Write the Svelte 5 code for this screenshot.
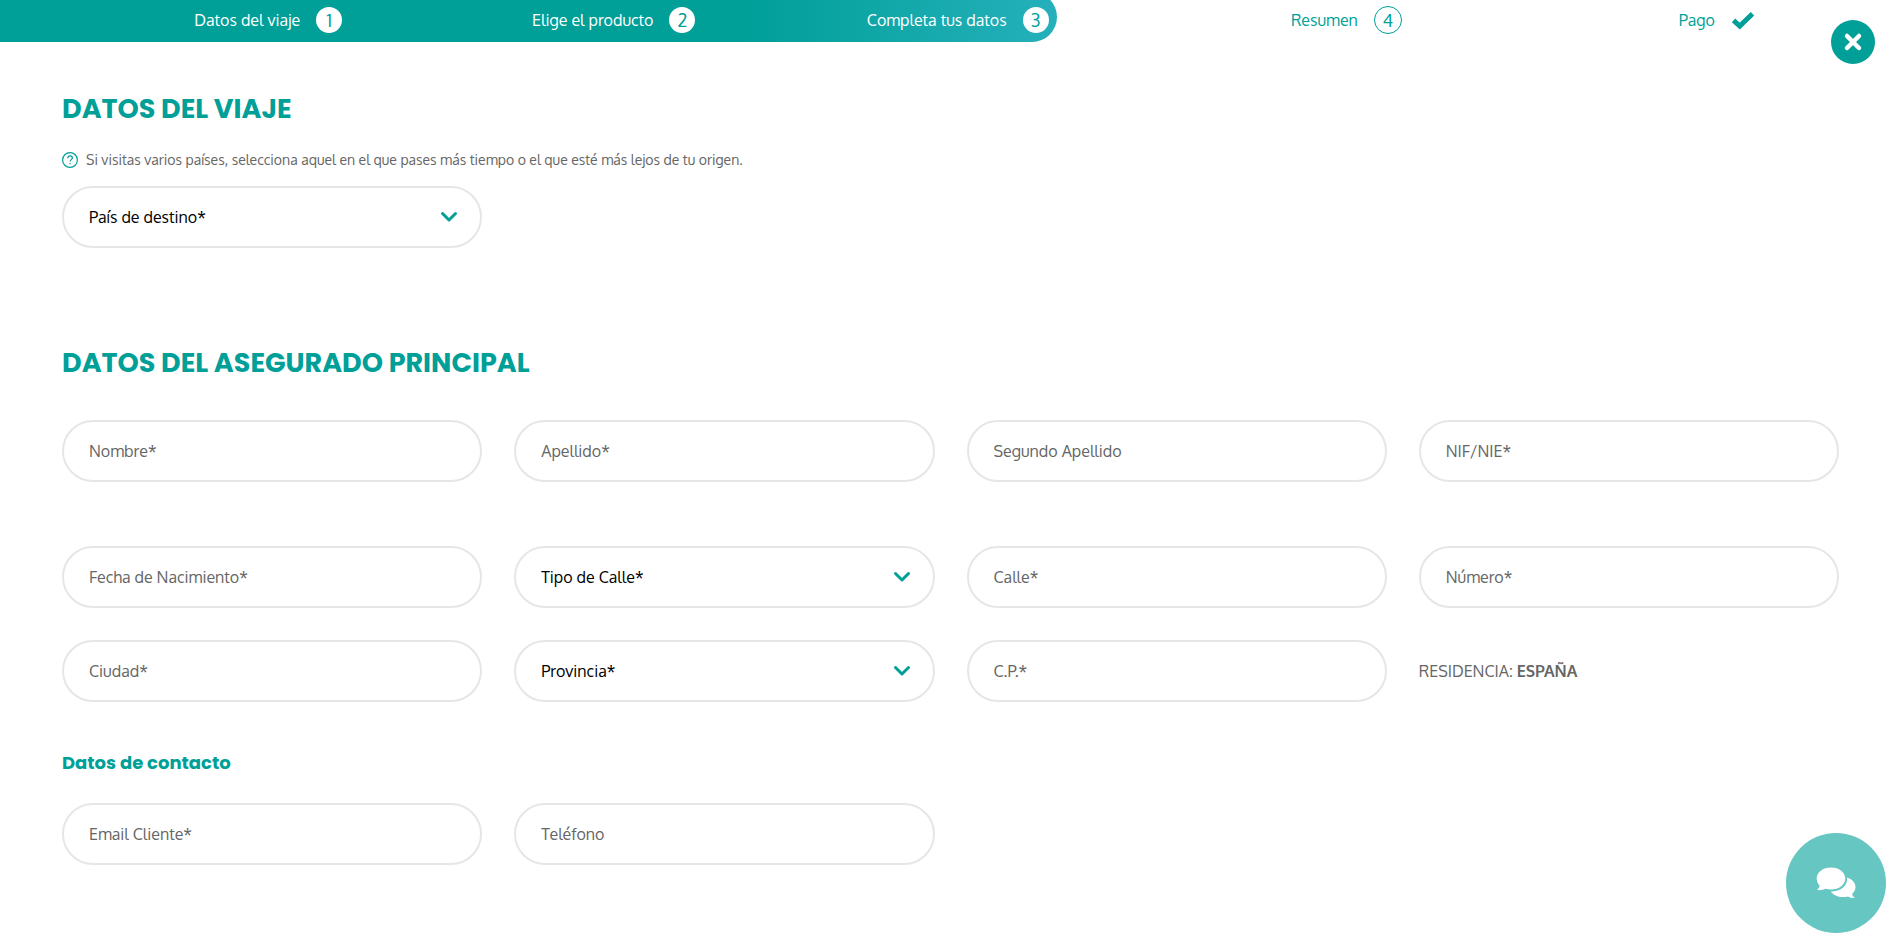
<script>
	const steps = [
		{ label: 'Datos del viaje', number: 1, done: true },
		{ label: 'Elige el producto', number: 2, done: true },
		{ label: 'Completa tus datos', number: 3, done: true },
		{ label: 'Resumen', number: 4, done: false },
		{ label: 'Pago', number: null, done: false }
	];

	const nameFields = [
		{ name: 'nombre', label: 'Nombre*' },
		{ name: 'apellido', label: 'Apellido*' },
		{ name: 'segundo-apellido', label: 'Segundo Apellido' },
		{ name: 'nif', label: 'NIF/NIE*' }
	];

	const addressFields = [
		{ name: 'fecha-nacimiento', label: 'Fecha de Nacimiento*' },
		{ name: 'tipo-calle', label: 'Tipo de Calle*', select: true },
		{ name: 'calle', label: 'Calle*' },
		{ name: 'numero', label: 'Número*' },
		{ name: 'ciudad', label: 'Ciudad*' },
		{ name: 'provincia', label: 'Provincia*', select: true },
		{ name: 'cp', label: 'C.P.*' }
	];

	const contactFields = [
		{ name: 'email', label: 'Email Cliente*', type: 'email' },
		{ name: 'telefono', label: 'Teléfono', type: 'tel' }
	];
</script>

{#snippet field(item)}
	{#if item.select}
		<div class="select-wrapper">
			<select class="field" name={item.name} aria-label={item.label}>
				<option value="">{item.label}</option>
			</select>
			<svg class="chevron" viewBox="0 0 18 12" aria-hidden="true">
				<path d="M2.5 2.5 9 9l6.5-6.5" />
			</svg>
		</div>
	{:else}
		<input
			class="field"
			type={item.type ?? 'text'}
			name={item.name}
			placeholder={item.label}
			aria-label={item.label}
		/>
	{/if}
{/snippet}

<header>
	<ol class="steps">
		{#each steps as step}
			<li class="step" class:done={step.done}>
				<span>{step.label}</span>
				{#if step.number}
					<span class="number">{step.number}</span>
				{:else}
					<svg class="check" viewBox="0 0 24 18" aria-hidden="true">
						<path d="M2.500 9.300 8.800 15 21.500 2.800" />
					</svg>
				{/if}
			</li>
		{/each}
	</ol>
	<button class="close" type="button" aria-label="Cerrar">
		<svg viewBox="0 0 20 20" aria-hidden="true">
			<path d="M4 4l12 12M16 4 4 16" />
		</svg>
	</button>
</header>

<main>
	<form>
		<section class="trip">
			<h2>DATOS DEL VIAJE</h2>
			<p class="hint">
				<svg class="help" viewBox="0 0 16 16" aria-hidden="true">
					<circle cx="8" cy="8" r="7.4" />
					<path d="M5.700 6.200C5.700 4.800 6.700 3.900 8.100 3.900S10.400 4.800 10.400 6C10.400 7.600 8.100 7.700 8.100 9.500" />
					<path d="M8.100 11v1.300" />
				</svg>
				<span>Si visitas varios países, selecciona aquel en el que pases más tiempo o el que esté más lejos de tu origen.</span>
			</p>
			<div class="grid">
				{@render field({ name: 'pais', label: 'País de destino*', select: true })}
			</div>
		</section>

		<section>
			<h2>DATOS DEL ASEGURADO PRINCIPAL</h2>
			<div class="grid names">
				{#each nameFields as item}
					{@render field(item)}
				{/each}
			</div>
			<div class="grid">
				{#each addressFields as item}
					{@render field(item)}
				{/each}
				<p class="residence">RESIDENCIA: <strong>ESPAÑA</strong></p>
			</div>
		</section>

		<section>
			<h3>Datos de contacto</h3>
			<div class="grid">
				{#each contactFields as item}
					{@render field(item)}
				{/each}
			</div>
		</section>
	</form>
</main>

<button class="chat" type="button" aria-label="Abrir chat">
	<svg viewBox="0 0 40 32" aria-hidden="true">
		<path d="M31 10.500c5 1.500 8.500 5 8.500 9.500 0 2.800-1.300 5.200-3.400 7 .3 1.600 1.300 2.800 2.700 3.900-2.400.2-4.700-.4-6.700-1.500-1.600.5-3.300.7-5.100.7-5.300 0-10-2.200-12.200-5.600C24 24.700 31 19.500 31 12.500z" />
		<path d="M15 .5C23 .5 29.300 5.300 29.300 11.500S23 22.500 15 22.500c-1.900 0-3.700-.3-5.300-.8C7.200 22.900 4.200 23.400.9 23c1.600-1.200 2.500-2.600 2.800-4.200C1.800 16.900.7 14.300.7 11.500.7 5.300 7 .5 15 .5z" />
	</svg>
</button>

<style>
	:global(body) {
		background: #fff;
		color: #666;
		font-family: Oxygen, 'Noto Sans', sans-serif;
		font-size: 16px;
	}

	/* Progress bar */
	header {
		position: relative;
		height: 42px;
	}
	.steps {
		display: grid;
		grid-template-columns: 342fr repeat(4, 353fr);
		height: 42px;
		margin: 0;
		padding: 0 139px 0 0;
		overflow: hidden;
		list-style: none;
	}
	/* Filled part, behind the first three steps */
	.steps::before {
		content: '';
		grid-area: 1 / 1 / 2 / 4;
		margin: -8px -8px 0 0;
		border-radius: 0 25px 25px 0;
		background: linear-gradient(90deg, #009f98 70%, #25b0bb);
	}
	.step {
		display: flex;
		grid-row: 1;
		align-items: center;
		justify-content: flex-end;
		gap: 16px;
		height: 40px;
		color: #009f98;
		font-size: 16px;
		white-space: nowrap;
	}
	.step:nth-child(1) { grid-column: 1; }
	.step:nth-child(2) { grid-column: 2; }
	.step:nth-child(3) { grid-column: 3; }
	.step:nth-child(4) { grid-column: 4; }
	.step:nth-child(5) { grid-column: 5; }
	.step.done {
		color: #fff;
	}
	.number {
		box-sizing: border-box;
		width: 28px;
		height: 28px;
		border: 1px solid #009f98;
		border-radius: 50%;
		font-size: 18px;
		line-height: 26px;
		text-align: center;
	}
	.done .number {
		width: 26px;
		height: 26px;
		border: 0;
		background: #fff;
		color: #009f98;
	}
	.check {
		width: 24px;
		height: 18px;
		fill: none;
		stroke: #009f98;
		stroke-width: 5;
		overflow: visible;
	}
	.close {
		display: grid;
		position: absolute;
		top: 20px;
		right: 19px;
		place-items: center;
		width: 44px;
		height: 44px;
		padding: 0;
		border: 0;
		border-radius: 50%;
		background: #009f98;
		cursor: pointer;
	}
	.close svg {
		width: 20px;
		height: 20px;
		fill: none;
		stroke: #fff;
		stroke-linecap: round;
		stroke-width: 4.5;
	}

	/* Form */
	main {
		padding: 46px 55px 72px 62px;
	}
	h2,
	h3 {
		margin: 0;
		color: #009f98;
		font-family: Poppins, Inter, sans-serif;
		font-weight: 700;
	}
	h2 {
		margin-bottom: 36px;
		font-size: 27px;
		line-height: 42px;
	}
	h3 {
		margin: 47px 0 27px;
		font-size: 18px;
		line-height: 27px;
	}
	.trip {
		margin-bottom: 94px;
	}
	.trip h2 {
		margin-bottom: 18px;
	}
	.hint {
		display: flex;
		align-items: center;
		gap: 8px;
		margin: 0 0 14px;
		font-size: 14px;
		line-height: 24px;
	}
	.help {
		flex: none;
		width: 16px;
		height: 16px;
		fill: none;
		stroke: #009f98;
		stroke-width: 1.2;
	}
	.grid {
		display: grid;
		grid-template-columns: repeat(4, 1fr);
		gap: 32px;
	}
	.names {
		margin-bottom: 64px;
	}
	.field {
		box-sizing: border-box;
		width: 100%;
		height: 62px;
		padding: 0 25px;
		border: 2px solid #e6e6e6;
		border-radius: 31px;
		background: #fff;
		color: #000;
		font-family: inherit;
		font-size: 16px;
		appearance: none;
	}
	.field::placeholder {
		color: #666;
		opacity: 1;
	}
	.field:focus {
		border-color: #009f98;
		outline: none;
	}
	.select-wrapper {
		position: relative;
	}
	.chevron {
		position: absolute;
		top: 25px;
		right: 24px;
		width: 18px;
		height: 12px;
		fill: none;
		stroke: #009f98;
		stroke-linecap: round;
		stroke-linejoin: round;
		stroke-width: 3;
		pointer-events: none;
	}
	.residence {
		align-self: center;
		margin: 0;
		font-size: 16px;
	}

	/* Chat bubble */
	.chat {
		display: grid;
		position: fixed;
		right: 8px;
		bottom: 7px;
		place-items: center;
		width: 100px;
		height: 100px;
		padding: 0;
		border: 0;
		border-radius: 50%;
		background: #66c6c1;
		cursor: pointer;
	}
	.chat svg {
		width: 40px;
		height: 32px;
		fill: #fff;
	}
</style>
